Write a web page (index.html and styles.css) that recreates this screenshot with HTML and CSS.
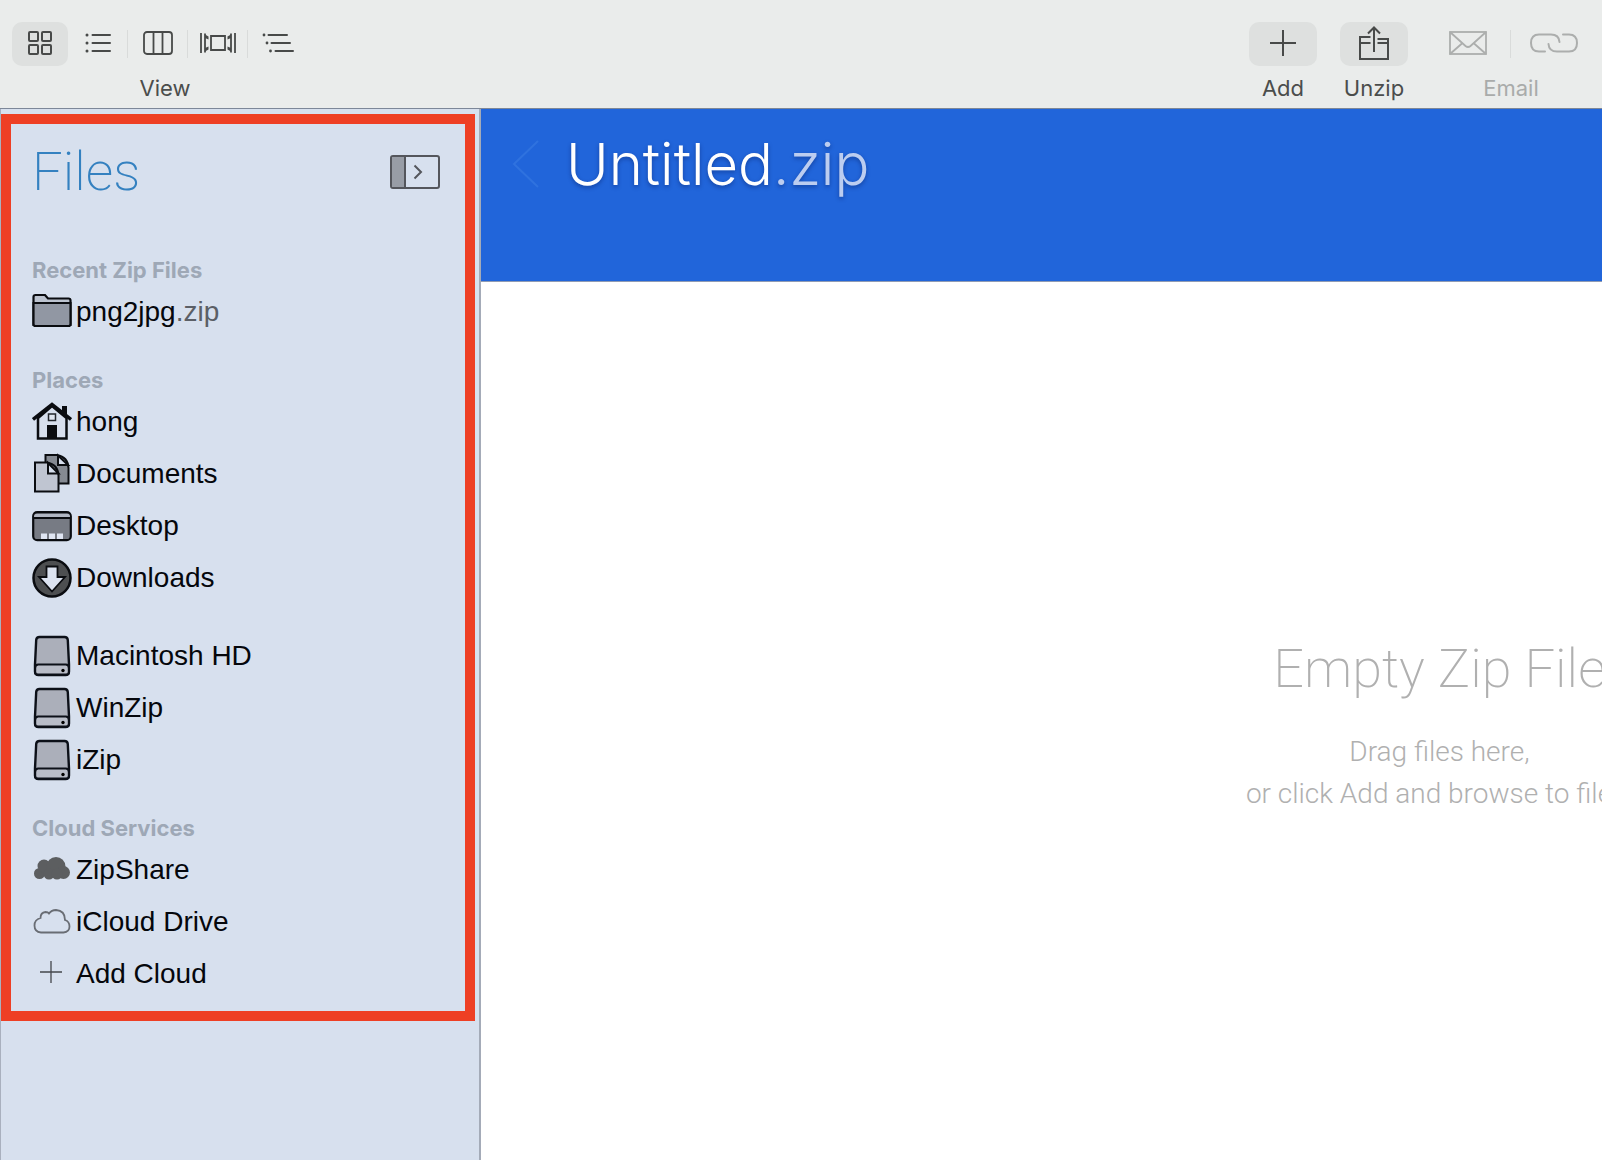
FILE: index.html
```html
<!DOCTYPE html>
<html lang="en">
<head>
<meta charset="utf-8">
<title>Untitled.zip</title>
<link rel="stylesheet" href="styles.css">
</head>
<body>
<svg class="defs" aria-hidden="true">
  <symbol id="drive" viewBox="0 0 40 42">
    <path d="M7.500 2h25q3 0 3.300 3l1.200 24.500v7q0 3.500-3.500 3.500h-27q-3.500 0-3.500-3.500v-7L4.200 5q.300-3 3.300-3z" fill="#abafba" stroke="#0c1018" stroke-width="2.400"/>
    <path d="M3.200 33q0-3.500 3-3.500h27.600q3 0 3 3.500v4q0 2.500-3 2.500H6.200q-3 0-3-2.500z" fill="#b9bdc8" stroke="#0c1018" stroke-width="2"/>
    <circle cx="31" cy="35.500" r="1.700" fill="#000"/>
  </symbol>
</svg>

<header class="toolbar">
  <div class="tool-group view-group">
    <div class="segments">
      <button class="segment selected" aria-label="Icon view"><svg width="24" height="24" viewBox="0 0 24 24" fill="none" stroke="#484a49" stroke-width="2"><rect x="1" y="1" width="9" height="9" rx="1"/><rect x="14" y="1" width="9" height="9" rx="1"/><rect x="1" y="14" width="9" height="9" rx="1"/><rect x="14" y="14" width="9" height="9" rx="1"/></svg></button>
      <button class="segment ruled" aria-label="List view"><svg width="26" height="20" viewBox="0 0 26 20" fill="none" stroke="#484a49" stroke-width="2" stroke-linecap="round"><path d="M7.500 2H25M7.500 10H25M7.500 18H25"/><path stroke-width="3" d="M2 2h.010M2 10h.010M2 18h.010"/></svg></button>
      <button class="segment ruled" aria-label="Column view"><svg width="30" height="24" viewBox="0 0 30 24" fill="none" stroke="#484a49" stroke-width="1.800"><rect x="1" y="1" width="28" height="22" rx="3"/><path d="M10.500 1v22M19.500 1v22"/></svg></button>
      <button class="segment ruled" aria-label="Gallery view"><svg width="36" height="22" viewBox="0 0 36 22" fill="none" stroke="#484a49" stroke-width="1.800"><path d="M1 1v20M5 1.500v19M31 1.500v19M35 1v20M11 4h14v14H11z"/><path d="M5 2.500l3.500 2v3L5 6zM5 19.500l3.500-2v-3L5 16zM31 2.500l-3.500 2v3L31 6zM31 19.500l-3.500-2v-3L31 16z" fill="#484a49" stroke="none"/></svg></button>
      <button class="segment" aria-label="Outline view"><svg width="32" height="20" viewBox="0 0 32 20" fill="none" stroke="#484a49" stroke-width="2" stroke-linecap="round"><path d="M6.500 2H25M9.500 10H28M13.500 18H31"/><path stroke-width="2.800" d="M2 2h.010M5 10h.010M8.500 18h.010"/></svg></button>
    </div>
    <span class="tool-label">View</span>
  </div>

  <div class="actions">
    <div class="tool-group">
      <button class="action" aria-labelledby="add-label"><svg width="26" height="26" viewBox="0 0 26 26" fill="none" stroke="#484a49" stroke-width="2"><path d="M13 0v26M0 13h26"/></svg></button>
      <span class="tool-label" id="add-label">Add</span>
    </div>
    <div class="tool-group">
      <button class="action" aria-labelledby="unzip-label"><svg width="30" height="34" viewBox="0 0 30 34" fill="none" stroke="#484a49" stroke-width="2"><path d="M11.500 11H1v22h28V13H18.500M1 17h10.500M18.500 17H29M15 26V1.500M9 7.500l6-6 6 6"/></svg></button>
      <span class="tool-label" id="unzip-label">Unzip</span>
    </div>
  </div>
  <div class="tool-group share-group">
    <div class="segments">
      <button class="segment ruled" disabled aria-label="Email"><svg width="38" height="24" viewBox="0 0 38 24" fill="none" stroke="#acaead" stroke-width="1.800"><rect x="1" y="1" width="36" height="22"/><path d="M1 1l15.500 14q2.500 2 5 0L37 1M1 23l12.500-11M37 23L24.500 12"/></svg></button>
      <button class="segment" disabled aria-label="Copy link"><svg width="48" height="20" viewBox="0 0 48 20" fill="none" stroke="#acaead" stroke-width="2" stroke-linecap="round"><path d="M15 18.500H9Q1 18.500 1 10T9 1.500h12q8 0 8.500 7.500M33 1.500h6q8 0 8 8.500t-8 8.500H27Q19 18.500 18.500 11"/></svg></button>
    </div>
    <span class="tool-label muted">Email</span>
  </div>
</header>

<div class="workspace">
  <aside class="sidebar">
    <nav class="files">
      <div class="files-head">
        <h2>Files</h2>
        <button class="collapse" aria-label="Collapse sidebar"><svg width="50" height="34" viewBox="0 0 50 34" fill="none" stroke="#54565c" stroke-width="2"><rect x="1" y="1" width="48" height="32" rx="2"/><path fill="#989da6" d="M2 2h13v30H2z" stroke="none"/><path d="M15 1v32M24.500 10.500l6.500 6.500-6.500 6.500"/></svg></button>
      </div>

      <section class="places">
        <h3>Recent Zip Files</h3>
        <ul>
          <li><a href="#"><svg class="icon" viewBox="0 0 40 42" stroke="#0a0c10" stroke-width="2.200"><path fill="#bcc3cf" d="M1.500 34V6q0-2 2-2h9.500l3 3.500h20.500q2 0 2 2V34z"/><path fill="#9197a3" d="M1.500 12h37v21q0 2-2 2h-33q-2 0-2-2z"/></svg><span>png2jpg<span class="ext">.zip</span></span></a></li>
        </ul>
      </section>

      <section class="places">
        <h3>Places</h3>
        <ul>
          <li><a href="#"><svg class="icon" viewBox="0 0 40 42"><path d="M6 17v20.500h28.500V17L20 5z" fill="#d7dfed" stroke="#0a0c10" stroke-width="2.500"/><path d="M1 18.500L20 3.500l19 15" fill="none" stroke="#0a0c10" stroke-width="3.400"/><path d="M30 5h5v11L30 12zM15 24h10v14H15z" fill="#0a0c10"/><path d="M16.500 13h7v6.500h-7z" fill="#dfe5ef" stroke="#22262c" stroke-width="1.500"/></svg>hong</a></li>
          <li><a href="#"><svg class="icon" viewBox="0 0 40 42" stroke="#0a0c10" stroke-width="2"><path fill="#858a92" d="M13.500 2H25q11 2 11.500 13v15.500h-23z"/><path fill="#d7dfed" d="M26 2.500V12h10z"/><path fill="#bfc5d1" d="M3 9.500h12q11 2 11.500 13v16H3z"/><path fill="#d7dfed" d="M16 10V20.500h10.500z"/></svg>Documents</a></li>
          <li><a href="#"><svg class="icon" viewBox="0 0 40 42"><rect x="1.200" y="7.200" width="37.600" height="28" rx="4" fill="#777b84" stroke="#0a0c10" stroke-width="2.200"/><path d="M4 9h32q2 0 2 3H2q0-3 2-3z" fill="#b1b7c3"/><path d="M2 13h36" stroke="#0a0c10" stroke-width="2"/><path d="M9 28.500h6V34H9zM17 28.500h6V34h-6zM25 28.500h6V34h-6z" fill="#dfe5f2"/></svg>Desktop</a></li>
          <li><a href="#"><svg class="icon" viewBox="0 0 40 42"><circle cx="20" cy="21" r="18.500" fill="#4d4f51" stroke="#0a0c10" stroke-width="2.500"/><path d="M14.500 9.500h11V20H33L20 34.500 7 20h7.500z" fill="#dce3f1" stroke="#0a0c10" stroke-width="1.800"/></svg>Downloads</a></li>
        </ul>
        <ul class="volumes">
          <li><a href="#"><svg class="icon"><use href="#drive"/></svg>Macintosh HD</a></li>
          <li><a href="#"><svg class="icon"><use href="#drive"/></svg>WinZip</a></li>
          <li><a href="#"><svg class="icon"><use href="#drive"/></svg>iZip</a></li>
        </ul>
      </section>

      <section class="places">
        <h3>Cloud Services</h3>
        <ul>
          <li><a href="#"><svg class="icon" viewBox="0 0 40 42" fill="#5c5e60"><circle cx="7.500" cy="24.500" r="5.500"/><circle cx="12" cy="17" r="6.500"/><circle cx="24" cy="17.500" r="9.500"/><circle cx="31.500" cy="23.500" r="6.500"/><circle cx="17" cy="25" r="5.500"/><circle cx="25" cy="25" r="5.500"/></svg>ZipShare</a></li>
          <li><a href="#"><svg class="icon" viewBox="0 0 40 42"><path d="M9 31.500q-6.500-.500-6.500-7 0-6 6-7.500 0-5.500 5-6 2.500 0 3.500 1.500 2.500-3.500 7-3.500 9 .500 9 10 4.500 1.500 4.500 6.500 0 5.500-6 6z" fill="none" stroke="#696d74" stroke-width="1.800"/></svg>iCloud Drive</a></li>
          <li><a href="#"><svg class="icon" viewBox="0 0 40 42"><path d="M19 8v22M8 19h22" stroke="#44474c" stroke-width="1.300"/></svg>Add Cloud</a></li>
        </ul>
      </section>
    </nav>
  </aside>

  <main class="archive">
    <header class="archive-head">
      <button class="back" disabled aria-label="Back"><svg width="28" height="48" viewBox="0 0 28 48" fill="none" stroke="#2f72df" stroke-width="2"><path d="M26 1L2 24l24 23"/></svg></button>
      <h1>Untitled<span class="title-ext">.zip</span></h1>
    </header>
    <div class="drop-zone">
      <div class="empty">
        <h2>Empty Zip File</h2>
        <p>Drag files here,<br>or click Add and browse to files.</p>
      </div>
    </div>
  </main>
</div>
</body>
</html>
```
FILE: styles.css
```css
* {
  box-sizing: border-box;
}

body {
  margin: 0;
  min-height: 100vh;
  display: flex;
  flex-direction: column;
  overflow-x: hidden;
  font-family: "Liberation Sans", Arial, sans-serif;
  font-size: 28px;
  color: #05070c;
  background: #fff;
}

h1, h2, h3, p, ul {
  margin: 0;
  padding: 0;
}

button {
  display: flex;
  align-items: center;
  justify-content: center;
  padding: 0;
  border: 0;
  background: none;
}

svg {
  display: block;
}

.defs {
  position: absolute;
  width: 0;
  height: 0;
}

/* Toolbar */
.toolbar {
  display: flex;
  justify-content: space-between;
  padding: 22px 6px 6px 12px;
  border-bottom: 1px solid #7d8798;
  background: #eaeceb;
}

.tool-group {
  display: flex;
  flex-direction: column;
  align-items: center;
  gap: 8px;
}

.tool-label {
  font: 400 22px/28px Inter, sans-serif;
  color: #4b4d4c;
}

.muted {
  color: #a9abaa;
}

.segments {
  display: flex;
}

.segment,
.action {
  height: 44px;
  padding-bottom: 2px;
}

.segment {
  width: 60px;
}

.selected {
  width: 56px;
  border-radius: 10px;
  background: #dee0df;
}

.ruled {
  border-right: 1px solid;
  border-image: linear-gradient(transparent 20%, #d9dbda 20%, #d9dbda 80%, transparent 80%) 1;
}

.view-group {
  width: 306px;
}

.view-group .segments {
  align-self: flex-start;
}

.actions {
  display: flex;
  gap: 23px;
  margin-left: auto;
  margin-right: 18px;
}

.action {
  width: 68px;
  border-radius: 10px;
  background: #dee0df;
}

.share-group .segment {
  width: 85px;
}

/* Sidebar */
.workspace {
  flex: 1;
  display: flex;
}

.sidebar {
  flex: none;
  width: 481px;
  padding: 5px 4px 0 0;
  border-left: 1px solid #a9b0be;
  border-right: 2px solid #a4abb8;
  background: #d7e0ee;
}

.files {
  padding: 0 21px 11px;
  border: 10px solid #ee3f24;
}

.files-head {
  display: flex;
  align-items: center;
  justify-content: space-between;
  height: 96px;
  margin-bottom: 35px;
  padding: 0 4px 0 0;
}

.files-head h2 {
  font: 200 54px/64px Roboto, sans-serif;
  color: #3481c0;
}

.places {
  margin-bottom: 27px;
}

.places:last-child {
  margin-bottom: 0;
}

.places h3 {
  font: 700 22px/31px Inter, sans-serif;
  color: #9ea8b6;
}

.places ul {
  list-style: none;
}

.places .volumes {
  margin-top: 26px;
}

.places a {
  display: flex;
  align-items: center;
  gap: 4px;
  height: 52px;
  color: inherit;
  text-decoration: none;
}

.icon {
  flex: none;
  width: 40px;
  height: 42px;
}

.ext {
  color: #5b5f66;
}

/* Archive pane */
.archive {
  flex: 1;
  min-width: 0;
  display: flex;
  flex-direction: column;
  overflow: hidden;
}

.archive-head {
  display: flex;
  align-items: flex-start;
  gap: 26px;
  height: 173px;
  padding: 31px 31px 0;
  border-bottom: 1px solid #8f9bb3;
  background: #2165da;
}

.archive-head h1 {
  font: 300 58px/48px Inter, sans-serif;
  color: #fff;
  text-shadow: 0 2px 4px rgba(0, 20, 80, 0.4);
}

.title-ext {
  color: #bccdf0;
}

.drop-zone {
  flex: 1;
  width: 171%;
  display: flex;
  align-items: center;
  justify-content: center;
  padding-top: 6px;
  text-align: center;
  color: #b0b0b0;
}

.empty h2 {
  margin-bottom: 26px;
  font: 200 54px/72px Roboto, sans-serif;
}

.empty p {
  font: 300 28px/42px Roboto, sans-serif;
}
```
